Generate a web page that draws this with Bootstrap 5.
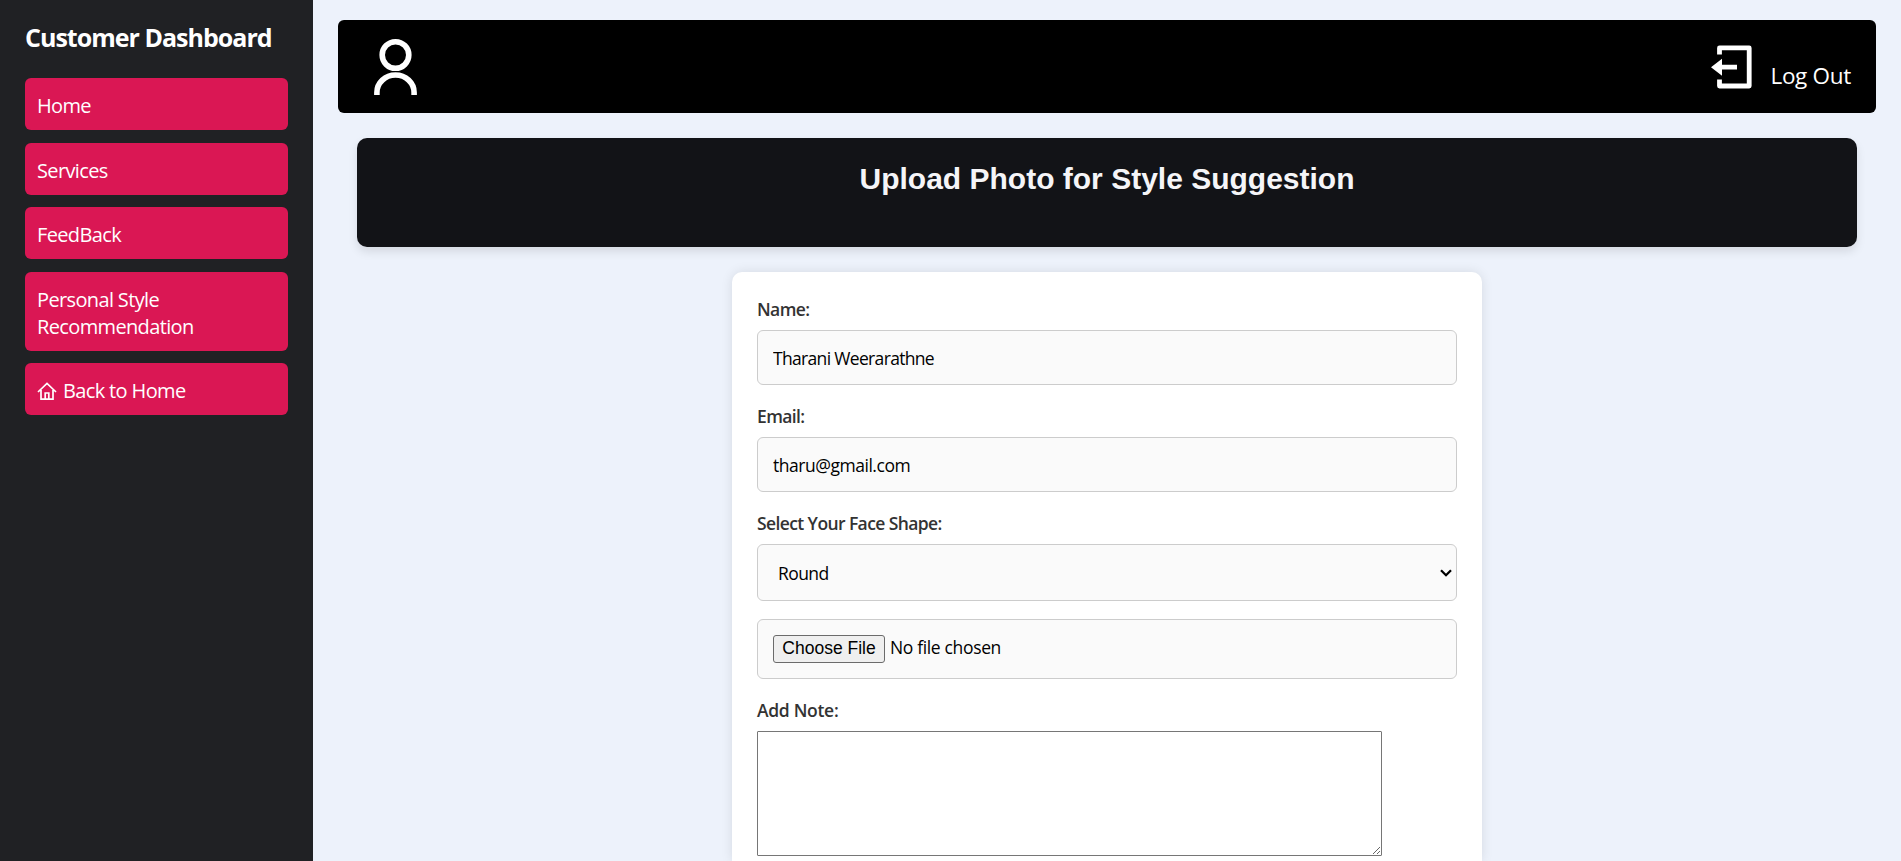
<!DOCTYPE html>
<html lang="en">
<head>
<meta charset="utf-8">
<title>Customer Dashboard</title>
<link href="https://cdn.jsdelivr.net/npm/bootstrap@5.3.0/dist/css/bootstrap.min.css" rel="stylesheet">
<style>
body { background: #edf2fb; font-family: "Open Sans", sans-serif; color: #333; }
.side-panel { width: 313px; padding: 25px; background: #202124; }
.side-title { font-size: 25px; font-weight: 700; letter-spacing: -.98px; line-height: 30px; margin: -3px 0 26px; }
.side-link { padding: 14px 12px 11px; border-radius: 6px; background: #da1754; color: #fff; font-size: 20px; line-height: 27px; letter-spacing: -.64px; }
.side-link svg { margin-right: 6px; }
.side-links { gap: 12.5px; }
.main-area { padding: 20px 25px 0; }
.top-bar { height: 93px; border-radius: 6px; padding: 0 25px 0 36px; background: #000; }
.log-out { font-size: 22.5px; letter-spacing: -.3px; line-height: 30px; gap: 17px; }
.log-out span { margin-top: 19px; }
.banner { margin: 25px 19px 0; height: 109px; border-radius: 10px; background: #121317; box-shadow: 0 5px 10px rgba(0,0,0,.1); padding-top: 23px; }
.banner h1 { font: 700 30px/36px "Liberation Sans", sans-serif; color: #f5f5f8; }
.form-panel { width: 750px; height: 589px; margin: 25px auto 0; padding: 25px; border-radius: 10px 10px 0 0; background: #fff; box-shadow: 0 0 12px rgba(0,0,0,.1); }
.field-label { display: block; height: 33px; font-size: 17.5px; line-height: 24px; font-weight: 600; letter-spacing: -.6px; }
.note-label { letter-spacing: -.3px; }
.field { display: block; width: 100%; border: 1px solid #ccc; border-radius: 6px; background-color: #fafafa; color: #000; font-size: 17.5px; padding: 1px 15px 0; outline: 0; letter-spacing: -.67px; }
.field-text { height: 55px; margin-bottom: 19px; }
.field-mail { letter-spacing: -.47px; }
.field-select { height: 57px; margin-bottom: 18px; padding: 1px 20px 0; letter-spacing: -.6px; appearance: none;
  background-image: url("data:image/svg+xml,%3Csvg xmlns='http://www.w3.org/2000/svg' width='12' height='8' fill='none' stroke='black' stroke-width='2.3'%3E%3Cpath d='M1 1.2 6 6.2 11 1.2'/%3E%3C/svg%3E"); background-repeat: no-repeat; background-position: right 4px top 24px; }
.field-file { height: 60px; padding: 14px 15px; margin-bottom: 19px; letter-spacing: -.35px; }
.field-file::file-selector-button { font: 17.5px "Liberation Sans", sans-serif; letter-spacing: 0; height: 28px; width: 112px; padding: 1px 6px; border: 1px solid #6b6b6b; border-radius: 3px; background: #efefef; color: #000; margin-right: 5px; }
.note-box { display: block; width: 625px; height: 125px; border: 1px solid #767676; border-radius: 1px; background: #fff; }
</style>
</head>
<body class="overflow-hidden">
<div class="d-flex vh-100">
  <aside class="side-panel flex-shrink-0 text-white">
    <h2 class="side-title text-nowrap">Customer Dashboard</h2>
    <nav class="side-links d-flex flex-column">
      <a class="side-link text-decoration-none" href="#">Home</a>
      <a class="side-link text-decoration-none" href="#">Services</a>
      <a class="side-link text-decoration-none" href="#">FeedBack</a>
      <a class="side-link text-decoration-none" href="#">Personal Style<br>Recommendation</a>
      <a class="side-link text-decoration-none d-flex align-items-center" href="#">
        <svg width="20" height="20" viewBox="0 0 20 20" fill="none" stroke="#fff" stroke-width="1.7"><path d="M1 11 10 2.500 19 11M4 9V18.200H16V9M8.200 18V12H11.800V18"/></svg>Back to Home</a>
    </nav>
  </aside>
  <main class="main-area flex-grow-1">
    <header class="top-bar d-flex align-items-center justify-content-between text-white">
      <svg width="44" height="57" viewBox="0 0 44 57" fill="none" stroke="#fff" stroke-width="5.600"><circle cx="21.500" cy="17" r="13.300"/><path d="M2.900 57V54.500A18.600 17.500 0 0 1 40.100 54.500V57"/></svg>
      <a class="log-out d-flex align-items-center text-white text-decoration-none" href="#">
        <svg width="42" height="44" viewBox="0 0 42 44"><path fill="none" stroke="#fff" stroke-width="4.800" stroke-linejoin="round" d="M8.500 9.500V2.900H38.200V41H8.500V34.500"/><path fill="#fff" d="M0 22.200 11 13.700V19.800H26V24.600H11V30.700Z"/></svg>
        <span>Log Out</span>
      </a>
    </header>
    <section class="banner text-center"><h1 class="m-0">Upload Photo for Style Suggestion</h1></section>
    <form class="form-panel">
      <label class="field-label" for="name">Name:</label>
      <input class="field field-text" id="name" type="text" value="Tharani Weerarathne">
      <label class="field-label" for="email">Email:</label>
      <input class="field field-text field-mail" id="email" type="email" value="tharu@gmail.com">
      <label class="field-label" for="shape">Select Your Face Shape:</label>
      <select class="field field-select" id="shape"><option>Round</option></select>
      <input class="field field-file" type="file" aria-label="Photo">
      <label class="field-label note-label" for="note">Add Note:</label>
      <textarea class="note-box" id="note"></textarea>
    </form>
  </main>
</div>
<script src="https://cdn.jsdelivr.net/npm/bootstrap@5.3.0/dist/js/bootstrap.bundle.min.js"></script>
</body>
</html>
